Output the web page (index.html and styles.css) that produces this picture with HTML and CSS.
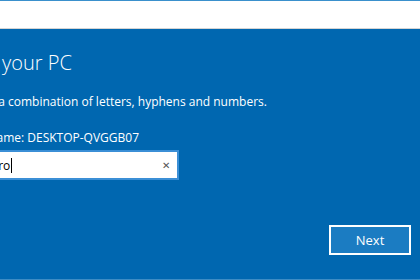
FILE: index.html
```html
<!DOCTYPE html>
<html lang="en">
<head>
  <meta charset="UTF-8" />
  <meta name="viewport" content="width=device-width, initial-scale=1.0"/>
  <title>Rename your PC</title>
  <link rel="stylesheet" href="styles.css">
</head>
<body>

<div class="window">
  <div class="titlebar"></div>
  <div class="page">
    <div class="content">
      <h1 class="heading">Rename your PC</h1>
      <p class="hint">You can use a combination of letters, hyphens and numbers.</p>
      <p class="current">Current PC name: DESKTOP-QVGGB07</p>
      <div class="textbox">
        <span class="value">Laptop-Alessandro</span><span class="caret"></span>
        <span class="clear">&#x2715;</span>
      </div>
    </div>
    <div class="actions">
      <button class="next">Next</button>
    </div>
  </div>
</div>

</body>
</html>
```

FILE: styles.css
```css
* {
  box-sizing: border-box;
}

html, body {
  margin: 0;
  height: 100%;
}

body {
  font-family: "Open Sans", "Noto Sans", sans-serif;
  overflow: hidden;
  background: #0067b0;
}

.window {
  height: 280px;
  display: flex;
  flex-direction: column;
  border-bottom: 1px solid #3d8cc4;
}

.titlebar {
  height: 29px;
  background: #fff;
  border-top: 1px solid #3a90cc;
  border-bottom: 1px solid #d4d4d4;
}

.page {
  flex: 1;
  display: flex;
  flex-direction: column;
  color: #fff;
}

.content {
  margin-left: -68px;
  padding-top: 20px;
}

.heading {
  margin: 0 0 0 -9px;
  font-size: 20px;
  font-weight: 300;
  line-height: 28px;
}

.hint {
  margin: 17px 0 0 -4px;
  font-size: 12px;
  line-height: 16px;
}

.current {
  margin: 20px 0 0 -7px;
  font-size: 12px;
  line-height: 16px;
}

.textbox {
  margin-top: 4px;
  width: 247px;
  height: 30px;
  background: #fff;
  border: 2px solid #3b8fd6;
  color: #000;
  font-size: 12px;
  display: flex;
  align-items: center;
  padding: 0 8px;
  overflow: hidden;
}

.value {
  flex-shrink: 0;
  white-space: nowrap;
  margin-left: -37px;
}

.caret {
  flex-shrink: 0;
  width: 1px;
  height: 15px;
  background: #000;
  margin-left: 1px;
}

.clear {
  margin-left: auto;
  margin-right: -1px;
  color: #555;
  font-size: 10px;
}

.actions {
  margin-top: auto;
  display: flex;
  justify-content: flex-end;
  padding: 0 9px 24px 0;
}

.next {
  width: 82px;
  height: 30px;
  background: #1b7cc2;
  border: 2px solid #fff;
  color: #fff;
  font-family: inherit;
  font-size: 13px;
  padding: 0;
}
```
